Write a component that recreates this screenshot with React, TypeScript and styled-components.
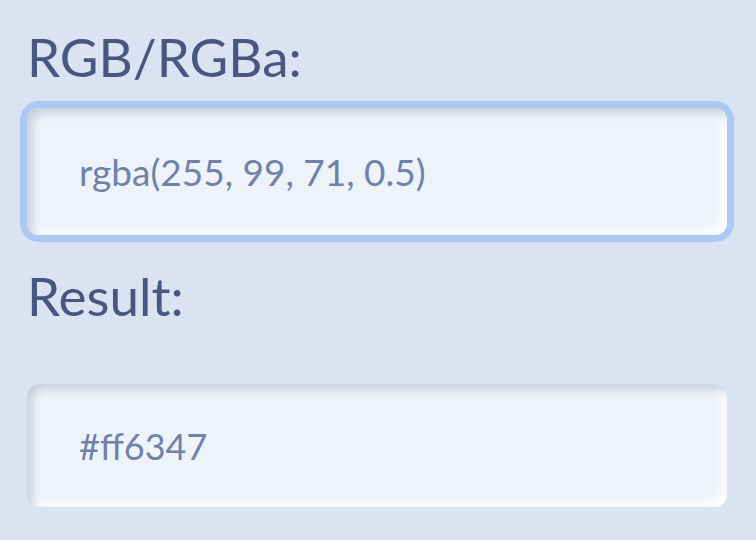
import styled, { createGlobalStyle } from "styled-components";

const GlobalStyle = createGlobalStyle`
  html, body {
    margin: 0;
    padding: 0;
    background: #dae3f1;
  }
  body {
    font-family: "Lato", "Noto Sans", sans-serif;
  }
`;

const Page = styled.div`
  display: flex;
  flex-direction: column;
  padding: 26px 29px 0 27px;
  width: 756px;
  height: 540px;
  box-sizing: border-box;
  overflow: hidden;
`;

const Label = styled.label<{ $gap: number }>`
  display: block;
  font-size: 53px;
  line-height: 62px;
  color: #47577f;
  margin-bottom: ${(p) => p.$gap}px;
`;

const Field = styled.input<{ $focused?: boolean }>`
  display: block;
  width: 100%;
  box-sizing: border-box;
  border: none;
  outline: none;
  border-radius: 12px;
  background: #eef3fa;
  padding: 0 52px;
  font-family: inherit;
  color: #7082a8;
  box-shadow: inset 5px 5px 10px #c6cfdf, inset -5px -5px 10px #ffffff
    ${(p) => (p.$focused ? ", 0 0 0 7px #abc9f1" : "")};
`;

const InputBox = styled(Field)`
  height: 127px;
  margin-bottom: 30px;
  font-size: 37px;
`;

const ResultBox = styled(Field)`
  height: 123px;
  font-size: 36px;
`;

export default function App() {
  return (
    <>
      <GlobalStyle />
      <Page>
        <Label $gap={20}>RGB/RGBa:</Label>
        <InputBox $focused readOnly value="rgba(255, 99, 71, 0.5)" />
        <Label $gap={57}>Result:</Label>
        <ResultBox readOnly value="#ff6347" />
      </Page>
    </>
  );
}
